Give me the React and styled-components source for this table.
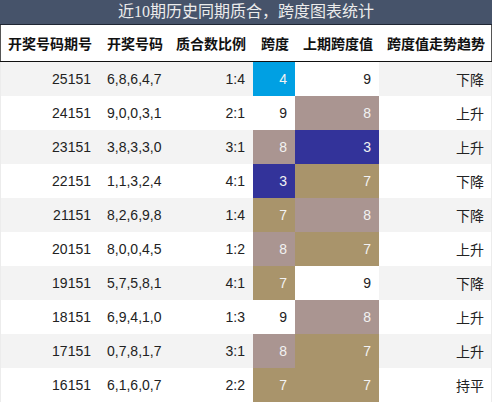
import React from "react";
import styled, { createGlobalStyle } from "styled-components";

const Global = createGlobalStyle`
  html, body { margin: 0; padding: 0; background: #fff; }
  body { font-family: "Liberation Sans", "Noto Sans CJK SC", sans-serif; }
`;

const COLS = "99px 69px 85px 42px 84px 113px";

const Wrap = styled.div`
  width: 492px;
`;

const Title = styled.div`
  height: 24px;
  border-bottom: 1px solid #1f2633;
  background: #46536a;
  color: #ececec;
  font-family: "Liberation Serif", "Noto Sans CJK SC", serif;
  font-size: 16px;
  line-height: 24px;
  text-align: center;
`;

const HeaderRow = styled.div`
  display: grid;
  grid-template-columns: ${COLS};
  height: 36px;
  border-bottom: 1px solid #111;
  box-shadow: inset 1px 0 0 #555, inset -1px 0 0 #555;
`;

const HeadCell = styled.div`
  display: flex;
  align-items: center;
  padding-left: 8px;
  font-weight: bold;
  font-size: 14px;
  color: #111;
  white-space: nowrap;
`;

const Row = styled.div`
  display: grid;
  grid-template-columns: ${COLS};
  height: 34px;
  background: ${(p) => (p.$alt ? "#f3f3f3" : "#ffffff")};
  box-shadow: inset 1px 0 0 #ececec, inset -1px 0 0 #ececec;
`;

const Cell = styled.div`
  display: flex;
  align-items: center;
  justify-content: ${(p) => (p.$left ? "flex-start" : "flex-end")};
  padding: 0 8px;
  font-size: 14px;
  color: ${(p) => (p.$light ? "#f2f2f2" : "#222")};
  background: ${(p) => p.$bg || "transparent"};
  white-space: nowrap;
`;

const SPAN_COLORS = { 3: "#33339a", 4: "#00a0e3", 7: "#a9946b", 8: "#aa9591" };

const SpanCell = ({ value }) => {
  const bg = SPAN_COLORS[value];
  return (
    <Cell $bg={bg || "#ffffff"} $light={!!bg}>
      {value}
    </Cell>
  );
};

const data = [
  ["25151", "6,8,6,4,7", "1:4", 4, 9, "下降"],
  ["24151", "9,0,0,3,1", "2:1", 9, 8, "上升"],
  ["23151", "3,8,3,3,0", "3:1", 8, 3, "上升"],
  ["22151", "1,1,3,2,4", "4:1", 3, 7, "下降"],
  ["21151", "8,2,6,9,8", "1:4", 7, 8, "下降"],
  ["20151", "8,0,0,4,5", "1:2", 8, 7, "上升"],
  ["19151", "5,7,5,8,1", "4:1", 7, 9, "下降"],
  ["18151", "6,9,4,1,0", "1:3", 9, 8, "上升"],
  ["17151", "0,7,8,1,7", "3:1", 8, 7, "上升"],
  ["16151", "6,1,6,0,7", "2:2", 7, 7, "持平"],
];

const heads = ["开奖号码期号", "开奖号码", "质合数比例", "跨度", "上期跨度值", "跨度值走势趋势"];

export default function App() {
  return (
    <Wrap>
      <Global />
      <Title>近10期历史同期质合，跨度图表统计</Title>
      <HeaderRow>
        {heads.map((h) => (
          <HeadCell key={h}>{h}</HeadCell>
        ))}
      </HeaderRow>
      {data.map((r, i) => (
        <Row key={r[0]} $alt={i % 2 === 0}>
          <Cell>{r[0]}</Cell>
          <Cell $left>{r[1]}</Cell>
          <Cell>{r[2]}</Cell>
          <SpanCell value={r[3]} />
          <SpanCell value={r[4]} />
          <Cell>{r[5]}</Cell>
        </Row>
      ))}
    </Wrap>
  );
}
